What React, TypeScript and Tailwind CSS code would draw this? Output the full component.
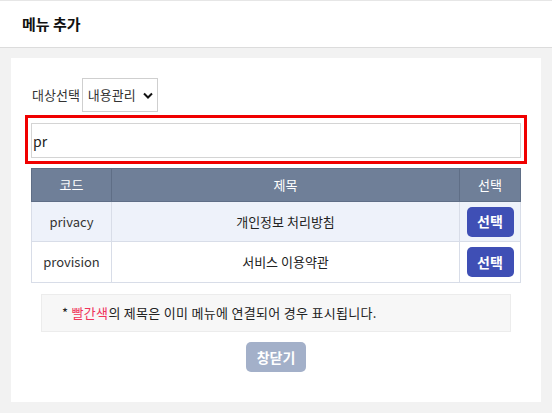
import { useState } from "react";

type Row = { code: string; title: string };

const rows: Row[] = [
  { code: "privacy", title: "개인정보 처리방침" },
  { code: "provision", title: "서비스 이용약관" },
];

const font = { fontFamily: '"Noto Sans CJK KR", "Noto Sans", sans-serif' };

const App = () => {
  const [keyword, setKeyword] = useState("pr");

  return (
    <div
      className="min-h-[413px] w-[552px] border-t border-[#e6e6e6] bg-[#f2f2f2] text-[#222]"
      style={font}
    >
      <div className="flex h-[47px] items-center border-b border-[#dcdcdc] bg-white px-[22px]">
        <h1 className="text-[15px] font-bold text-[#111]">메뉴 추가</h1>
      </div>

      <div className="px-[11px] pt-[10px] pb-[11px]">
        <div className="flex flex-col bg-white px-[14px] pt-[20px] pb-[30px]">
          <div className="flex items-center pl-[7px]">
            <span className="text-[13px] text-[#333]">대상선택</span>
            <div className="ml-[2px] flex h-[34px] w-[76px] items-center justify-between border border-[#cfcfcf] pr-[4px] pl-[5px]">
              <span className="text-[13px] text-[#333]">내용관리</span>
              <svg width="10" height="7" viewBox="0 0 10 7">
                <path d="M1 1.5 L5 5.5 L9 1.5" fill="none" stroke="#111" strokeWidth="2" />
              </svg>
            </div>
          </div>

          <div className="mt-[3px] border-[3px] border-[#f00000] px-[3px] pt-[5px] pb-[3px]">
            <input
              value={keyword}
              onChange={(e) => setKeyword(e.target.value)}
              className="h-[35px] w-full border border-[#d4d4d4] px-[1px] text-[14px] text-[#222] outline-none"
              style={font}
            />
          </div>

          <div className="mx-[6px] mt-[4px]">
            <table className="w-full border-collapse text-[13px]">
              <thead>
                <tr className="h-[33px] bg-[#6f7f98] text-white">
                  <th className="w-[80px] border border-[#5f6e86] font-normal">코드</th>
                  <th className="border border-[#5f6e86] font-normal">제목</th>
                  <th className="w-[61px] border border-[#5f6e86] font-normal">선택</th>
                </tr>
              </thead>
              <tbody>
                {rows.map((row, i) => (
                  <tr
                    key={row.code}
                    className={i === 0 ? "h-[40px] bg-[#eef2fa]" : "h-[41px] bg-white"}
                  >
                    <td className="border border-[#d8dde8] text-center text-[#333]">{row.code}</td>
                    <td className="border border-[#d8dde8] text-center text-[#222]">{row.title}</td>
                    <td className="border border-[#d8dde8] text-center">
                      <button
                        type="button"
                        className="h-[30px] w-[47px] rounded-[5px] bg-[#3f4fb5] text-[14px] font-bold text-white"
                      >
                        선택
                      </button>
                    </td>
                  </tr>
                ))}
              </tbody>
            </table>
          </div>

          <div className="mx-[16px] mt-[11px] flex h-[38px] items-center border border-[#ececec] bg-[#f7f7f7] pl-[20px] text-[13px] tracking-[0.3px] text-[#222]">
            <span>
              * <span className="text-[#f0345a]">빨간색</span>의 제목은 이미 메뉴에 연결되어 경우 표시됩니다.
            </span>
          </div>

          <div className="mt-[10px] flex justify-center">
            <button
              type="button"
              className="h-[30px] w-[60px] rounded-[5px] bg-[#a3b0c9] text-[14px] font-bold text-white"
            >
              창닫기
            </button>
          </div>
        </div>
      </div>
    </div>
  );
};

export default App;
